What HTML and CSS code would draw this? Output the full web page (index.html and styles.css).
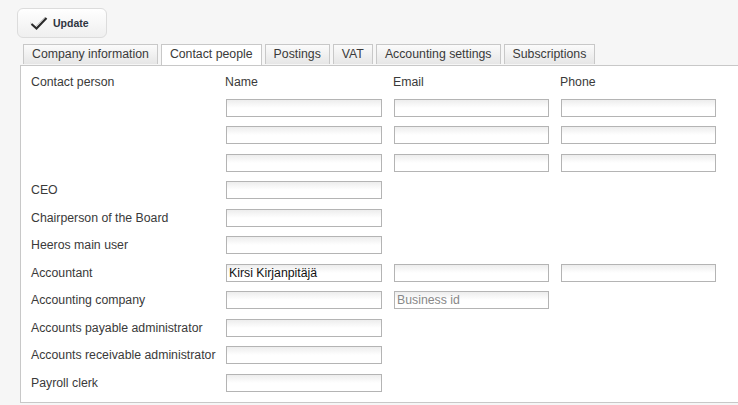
FILE: index.html
```html
<!DOCTYPE html>
<html lang="en">
<head>
  <meta charset="UTF-8" />
  <title>Contact people</title>
  <link rel="stylesheet" href="styles.css">
</head>
<body>

  <div class="toolbar">
    <button class="btn-update" type="button">
      <svg width="18" height="14" viewBox="0 0 18 14" aria-hidden="true">
        <path d="M1 6.5 L6 11 L16 1" fill="none" stroke="#ccc" stroke-width="1" transform="translate(-1 -1)" />
        <path d="M1.5 7 L6.5 11.5 L16.5 1" fill="none" stroke="#2b2b2b" stroke-width="2.2" />
      </svg>
      Update
    </button>
  </div>

  <ul class="tabs">
    <li>Company information</li>
    <li class="active">Contact people</li>
    <li>Postings</li>
    <li>VAT</li>
    <li>Accounting settings</li>
    <li>Subscriptions</li>
  </ul>

  <div class="panel">
    <div class="contacts">
      <div class="row head">
        <span>Contact person</span>
        <span>Name</span>
        <span>Email</span>
        <span>Phone</span>
      </div>
      <div class="row">
        <span></span>
        <input type="text"><input type="text"><input type="text">
      </div>
      <div class="row">
        <span></span>
        <input type="text"><input type="text"><input type="text">
      </div>
      <div class="row">
        <span></span>
        <input type="text"><input type="text"><input type="text">
      </div>
      <div class="row">
        <label>CEO</label>
        <input type="text">
      </div>
      <div class="row">
        <label>Chairperson of the Board</label>
        <input type="text">
      </div>
      <div class="row">
        <label>Heeros main user</label>
        <input type="text">
      </div>
      <div class="row">
        <label>Accountant</label>
        <input type="text" value="Kirsi Kirjanpitäjä"><input type="text"><input type="text">
      </div>
      <div class="row">
        <label>Accounting company</label>
        <input type="text"><input type="text" placeholder="Business id">
      </div>
      <div class="row">
        <label>Accounts payable administrator</label>
        <input type="text">
      </div>
      <div class="row">
        <label>Accounts receivable administrator</label>
        <input type="text">
      </div>
      <div class="row">
        <label>Payroll clerk</label>
        <input type="text">
      </div>
    </div>
  </div>

</body>
</html>
```

FILE: styles.css
```css
* {
  box-sizing: border-box;
}

html,
body {
  overflow: hidden;
}

body {
  margin: 0;
  background: #f6f6f6;
  font-family: "Liberation Sans", Arial, sans-serif;
  font-size: 12.3px;
  color: #333;
}

.toolbar {
  padding: 8px 17px 0;
}

.btn-update {
  display: flex;
  align-items: center;
  gap: 5px;
  width: 90px;
  height: 30px;
  padding: 0 0 0 12px;
  border: 1px solid #dcdcdc;
  border-radius: 6px;
  background: linear-gradient(#ffffff, #efefef);
  font-family: "Liberation Sans", Arial, sans-serif;
  font-size: 10.5px;
  font-weight: bold;
  color: #2e3440;
  cursor: pointer;
}

.btn-update svg {
  margin-top: 1px;
}

.tabs {
  display: flex;
  gap: 3px;
  list-style: none;
  margin: 6px 0 0 23px;
  padding: 0;
  position: relative;
  z-index: 1;
}

.tabs li {
  height: 20px;
  padding: 0 8px;
  line-height: 19px;
  border: 1px solid #c8c8c8;
  border-bottom: none;
  background: linear-gradient(#fbfbfb, #e6e6e6);
  color: #3a3a3a;
  white-space: nowrap;
}

.tabs li.active {
  height: 21px;
  background: #fff;
}

.panel {
  width: 730px;
  margin-left: 20px;
  padding: 8px 0 10px 10px;
  background: #fff;
  border: 1px solid #c8c8c8;
}

.contacts {
  display: flex;
  flex-direction: column;
  gap: 9.5px;
}

.row {
  display: grid;
  grid-template-columns: 183px 156px 155px 155px;
  column-gap: 12px;
  align-items: center;
  height: 18px;
  color: #3a3a3a;
}

.row.head {
  height: 16px;
  margin-bottom: -1px;
}

.row.head span:not(:first-child) {
  margin-left: -1px;
}

label {
  white-space: nowrap;
}

input {
  width: 100%;
  height: 18px;
  margin: 0;
  padding: 0 2px;
  border: 1px solid #b4b4b4;
  background: linear-gradient(#ededed, #ffffff 8px);
  font-family: "Liberation Sans", Arial, sans-serif;
  font-size: 12.3px;
  color: #111;
}

input::placeholder {
  color: #888;
}
```
